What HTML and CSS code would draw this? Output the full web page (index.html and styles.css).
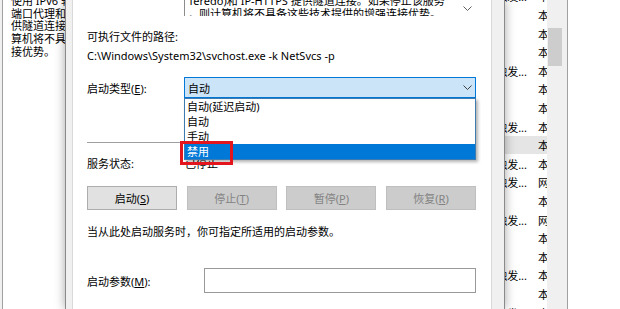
FILE: index.html
```html
<!DOCTYPE html>
<html lang="zh-CN">
<head>
<meta charset="utf-8">
<title>IP Helper 属性</title>
<link rel="stylesheet" href="styles.css">
</head>
<body>
<div class="screen">
  <aside class="bg-left">
    <div class="bg-desc">
      <div class="bg-lines">
        <p class="bg-line">使用 IPv6 转换技术(6to4、ISATAP、</p>
        <p class="bg-line">端口代理和 Teredo)和 IP-HTTPS 提</p>
        <p class="bg-line">供隧道连接。如果停止该服务，则计</p>
        <p class="bg-line">算机将不具备这些技术提供的增强连</p>
        <p class="bg-line">接优势。</p>
      </div>
    </div>
  </aside>

  <section class="dialog">
    <div class="page">
      <div class="row desc-row">
        <span class="label lw-desc"></span>
        <div class="descbox">
          <div class="descbox-text">
            <p>Teredo)和 IP-HTTPS 提供隧道连接。如果停止该服务</p>
            <p>，则计算机将不具备这些技术提供的增强连接优势。</p>
          </div>
          <div class="descbox-scroll">
            <svg width="9" height="5" viewBox="0 0 9 5"><polyline points="0.5,0.5 4.5,4.5 8.5,0.5" fill="none" stroke="#606060" stroke-width="1"/></svg>
          </div>
        </div>
      </div>

      <p class="path-label">可执行文件的路径:</p>
      <p class="path-value">C:\Windows\System32\svchost.exe -k NetSvcs -p</p>

      <div class="row combo-row">
        <span class="label lw-combo">启动类型(<u>E</u>):</span>
        <div class="combo">
          <span>自动</span>
          <svg width="9" height="5" viewBox="0 0 9 5"><polyline points="0.5,0.5 4.5,4.5 8.5,0.5" fill="none" stroke="#404040" stroke-width="1"/></svg>
          <ul class="dropdown">
            <li>自动(延迟启动)</li>
            <li>自动</li>
            <li>手动</li>
            <li class="selected">禁用</li>
          </ul>
          <div class="mark"></div>
        </div>
      </div>

      <div class="separator"></div>

      <div class="row status-row">
        <span class="label lw-status">服务状态:</span>
        <span>已停止</span>
      </div>

      <div class="btns">
        <div class="btn">启动(<u>S</u>)</div>
        <div class="btn disabled">停止(<u>T</u>)</div>
        <div class="btn disabled">暂停(<u>P</u>)</div>
        <div class="btn disabled">恢复(<u>R</u>)</div>
      </div>

      <p class="hint">当从此处启动服务时，你可指定所适用的启动参数。</p>

      <div class="row param-row">
        <span class="label lw-param">启动参数(<u>M</u>):</span>
        <div class="input"></div>
      </div>
    </div>
  </section>

  <aside class="bg-right">
    <div class="svc-list">
      <div class="svc-rows">
        <div class="svc-row"><span class="svc-start">(触发...</span><span class="svc-logon">本地系统</span></div>
        <div class="svc-row"><span class="svc-start"></span><span class="svc-logon">本地系统</span></div>
        <div class="svc-row"><span class="svc-start"></span><span class="svc-logon">本地系统</span></div>
        <div class="svc-row"><span class="svc-start"></span><span class="svc-logon">本地系统</span></div>
        <div class="svc-row"><span class="svc-start">(触发...</span><span class="svc-logon">本地系统</span></div>
        <div class="svc-row"><span class="svc-start"></span><span class="svc-logon">本地系统</span></div>
        <div class="svc-row"><span class="svc-start"></span><span class="svc-logon">本地系统</span></div>
        <div class="svc-row"><span class="svc-start">(触发...</span><span class="svc-logon">本地系统</span></div>
        <div class="svc-row sel"><span class="svc-start"></span><span class="svc-logon">本地系统</span></div>
        <div class="svc-row"><span class="svc-start">(触发...</span><span class="svc-logon">本地系统</span></div>
        <div class="svc-row"><span class="svc-start">(触发...</span><span class="svc-logon">网络服务</span></div>
        <div class="svc-row"><span class="svc-start"></span><span class="svc-logon">本地系统</span></div>
        <div class="svc-row"><span class="svc-start">(触发...</span><span class="svc-logon">网络服务</span></div>
        <div class="svc-row"><span class="svc-start"></span><span class="svc-logon">本地系统</span></div>
        <div class="svc-row"><span class="svc-start"></span><span class="svc-logon">本地系统</span></div>
        <div class="svc-row"><span class="svc-start">(触发...</span><span class="svc-logon">本地系统</span></div>
        <div class="svc-row"><span class="svc-start"></span><span class="svc-logon">本地系统</span></div>
        <div class="svc-row"><span class="svc-start">(触发...</span><span class="svc-logon">本地系统</span></div>
      </div>
    </div>
    <div class="vscroll"><div class="thumb"></div></div>
    <div class="edge"></div>
  </aside>
  <div class="bg-far"></div>
</div>
</body>
</html>
```

FILE: styles.css
```css
* { box-sizing: border-box; margin: 0; padding: 0; }
html, body { width: 620px; height: 309px; overflow: hidden; }
body {
  font-family: "Noto Sans", "Noto Sans CJK SC", sans-serif;
  font-size: 11px;
  color: #000;
  background: #fff;
}
ul { list-style: none; }
u { text-decoration: underline; text-underline-offset: 1px; }

.screen { display: flex; width: 620px; height: 309px; overflow: hidden; }

/* left background (services window description pane) */
.bg-left { width: 65px; flex: none; padding-left: 2px; background: #f0f0f0; }
.bg-desc { height: 100%; border-left: 1px solid #a0a0a0; background: #fff; padding-left: 8px; overflow: hidden; }
.bg-lines { margin-top: -5px; }
.bg-line { line-height: 12.7px; white-space: nowrap; }

/* dialog */
.dialog {
  position: relative;
  z-index: 1;
  width: 440px;
  flex: none;
  background: #f0f0f0;
  border-left: 1px solid #8a8a8a;
  border-right: 1px solid #8a8a8a;
  padding: 0 12px 0 6px;
  box-shadow: 0 0 10px rgba(0, 0, 0, 0.35);
}
.page {
  height: 100%;
  background: #fff;
  border-left: 1px solid #d9d9d9;
  border-right: 1px solid #d9d9d9;
  padding-left: 14px;
}
.row { display: flex; align-items: center; }
.label { flex: none; white-space: nowrap; }
.lw-desc, .lw-combo { width: 97px; }
.lw-status { width: 98px; }
.lw-param { width: 117px; }

.desc-row { height: 16px; align-items: stretch; }
.descbox {
  width: 292px;
  height: 16px;
  display: flex;
  border-left: 1px solid #8c8c8c;
  overflow: hidden;
}
.descbox-text { flex: 1; padding-left: 3px; margin-top: -6.5px; line-height: 13px; white-space: nowrap; overflow: hidden; }
.descbox-scroll { width: 18px; flex: none; display: flex; justify-content: center; padding-top: 6px; }
.descbox-scroll svg { display: block; }

.path-label { margin-top: 12px; line-height: 18px; }
.path-value { margin-top: 1px; line-height: 18px; white-space: nowrap; }

.combo-row { margin-top: 12px; height: 21px; }
.combo {
  position: relative;
  width: 292px;
  height: 21px;
  border: 1px solid #0078d7;
  background: #cce4f7;
  display: flex;
  align-items: center;
  justify-content: space-between;
  padding: 0 3px 0 3px;
}
.combo svg { display: block; }
.dropdown {
  position: absolute;
  left: -1px;
  top: 20px;
  width: 292px;
  background: #fff;
  border: 1px solid #3d7bb0;
  box-shadow: 2px 2px 3px rgba(0, 0, 0, 0.3);
  z-index: 2;
}
.dropdown li { height: 15px; line-height: 15px; padding-left: 2px; white-space: nowrap; }
.dropdown li.selected { background: #0078d7; color: #fff; }
.mark {
  position: absolute;
  left: -5px;
  top: 63px;
  width: 53px;
  height: 24px;
  border: 3px solid #e3161d;
  z-index: 3;
}

.separator { margin-top: 44px; width: 389px; height: 1px; background: #a0a0a0; }

.status-row { margin-top: 12px; line-height: 18px; }

.btns { margin-top: 13px; width: 389px; display: flex; justify-content: space-between; }
.btn {
  width: 90px;
  height: 24px;
  border: 1px solid #adadad;
  background: #e1e1e1;
  display: flex;
  align-items: center;
  justify-content: center;
}
.btn.disabled { background: #cccccc; border-color: #bfbfbf; color: #838383; }

.hint { margin-top: 13px; line-height: 18px; white-space: nowrap; }

.param-row { margin-top: 27px; height: 25px; }
.input { width: 272px; height: 25px; border: 1px solid #999; background: #fff; }

/* right background (services list) */
.bg-right { display: flex; flex: none; width: 63px; }
.svc-list { width: 42px; flex: none; overflow: hidden; background: #fff; }
.svc-rows { margin-top: -12.9px; }
.svc-row { height: 18.6px; display: flex; align-items: center; white-space: nowrap; }
.svc-row.sel { background: #e5e5e5; }
.svc-start { width: 33px; flex: none; display: flex; justify-content: flex-end; overflow: hidden; padding-right: 11px; }
.svc-logon { flex: none; }
.vscroll { width: 16px; flex: none; background: #f0f0f0; padding: 28px 1px 0 1px; }
.thumb { width: 14px; height: 38px; background: #cdcdcd; }
.edge { width: 5px; flex: none; background: #f0f0f0; border-right: 1px solid #a0a0a0; }
.bg-far { flex: 1; background: #fff; }
```
